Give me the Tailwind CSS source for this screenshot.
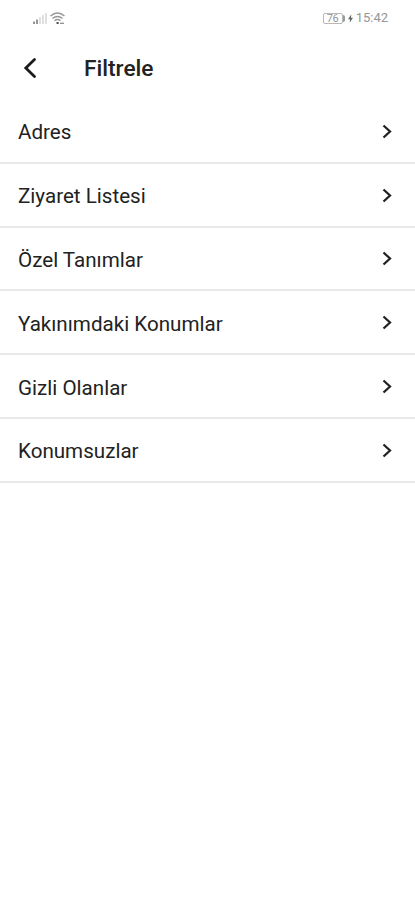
<!DOCTYPE html>
<html lang="tr"><head><meta charset="utf-8"><title>Filtrele</title>
<script src="https://cdn.jsdelivr.net/npm/@tailwindcss/browser@4"></script></head>
<body class="bg-white font-['Roboto',sans-serif] text-[#222]">
<div class="flex h-[900px] w-[415px] flex-col overflow-hidden">
<div class="flex h-9 items-center justify-between pr-[27px] pl-[33px] text-[#969696]">
<div class="flex items-center gap-[3px]">
<svg width="14" height="12" viewBox="0 0 14 12" fill="currentColor"><path d="M0 9.500h2v2.500H0zM3 7.500h2v4.500H3z"/><path opacity=".3" d="M6 5h2v7H6zM9 3h2v9H9zM12 1h2v11h-2z"/></svg>
<svg width="15" height="13" viewBox="0 0 15 13" fill="none" stroke="currentColor" stroke-width="1.400"><path d="M.5 4q7-6 14 0M2.500 6.500q5-4 10 0M4.500 8.700q3-2.400 6 0"/><path d="M6.500 11h2.200" stroke="#555" stroke-width="2"/><path d="M10 11.300h4"/></svg>
</div>
<div class="flex items-center">
<div class="flex h-[11px] w-[20px] items-center justify-center rounded-[2px] border border-[#b8b8b8] text-[11px] leading-none tracking-tight">76</div><div class="h-[7px] w-[2px] rounded-r-sm bg-[#999]"></div>
<svg class="ml-[3px]" width="5" height="9" viewBox="0 0 6 10" fill="#666"><path d="M4 0 0 6h2.500L2 10l4-6H3.500z"/></svg>
<span class="ml-[3px] text-[13px]">15:42</span>
</div></div>
<header class="flex h-16 items-center pl-[23px]">
<svg class="mb-px" width="14" height="22" viewBox="0 0 14 22" fill="none" stroke="#1c1c1c" stroke-width="2.800" stroke-linecap="round"><path d="M11.500 2.500 2.800 11l8.700 8.500"/></svg>
<h1 class="ml-[47px] pt-[3px] text-[22.700px] font-medium">Filtrele</h1>
</header>
<ul class="text-[20.600px]">
<li class="flex h-[63.800px] items-center justify-between border-b-2 border-[#e9e9e9] pt-[4px] pr-[23px] pl-[18px]">Adres<svg class="mb-[2px]" width="10" height="16" viewBox="0 0 10 16" fill="none" stroke="#222" stroke-width="2.300"><path d="m1.500 1.500 6.500 6-6.500 6"/></svg></li>
<li class="flex h-[63.800px] items-center justify-between border-b-2 border-[#e9e9e9] pt-[4px] pr-[23px] pl-[18px]">Ziyaret Listesi<svg class="mb-[2px]" width="10" height="16" viewBox="0 0 10 16" fill="none" stroke="#222" stroke-width="2.300"><path d="m1.500 1.500 6.500 6-6.500 6"/></svg></li>
<li class="flex h-[63.800px] items-center justify-between border-b-2 border-[#e9e9e9] pt-[4px] pr-[23px] pl-[18px]">Özel Tanımlar<svg class="mb-[2px]" width="10" height="16" viewBox="0 0 10 16" fill="none" stroke="#222" stroke-width="2.300"><path d="m1.500 1.500 6.500 6-6.500 6"/></svg></li>
<li class="flex h-[63.800px] items-center justify-between border-b-2 border-[#e9e9e9] pt-[4px] pr-[23px] pl-[18px]">Yakınımdaki Konumlar<svg class="mb-[2px]" width="10" height="16" viewBox="0 0 10 16" fill="none" stroke="#222" stroke-width="2.300"><path d="m1.500 1.500 6.500 6-6.500 6"/></svg></li>
<li class="flex h-[63.800px] items-center justify-between border-b-2 border-[#e9e9e9] pt-[4px] pr-[23px] pl-[18px]">Gizli Olanlar<svg class="mb-[2px]" width="10" height="16" viewBox="0 0 10 16" fill="none" stroke="#222" stroke-width="2.300"><path d="m1.500 1.500 6.500 6-6.500 6"/></svg></li>
<li class="flex h-[63.800px] items-center justify-between border-b-2 border-[#e9e9e9] pt-[4px] pr-[23px] pl-[18px]">Konumsuzlar<svg class="mb-[2px]" width="10" height="16" viewBox="0 0 10 16" fill="none" stroke="#222" stroke-width="2.300"><path d="m1.500 1.500 6.500 6-6.500 6"/></svg></li>
</ul>
</div></body></html>
